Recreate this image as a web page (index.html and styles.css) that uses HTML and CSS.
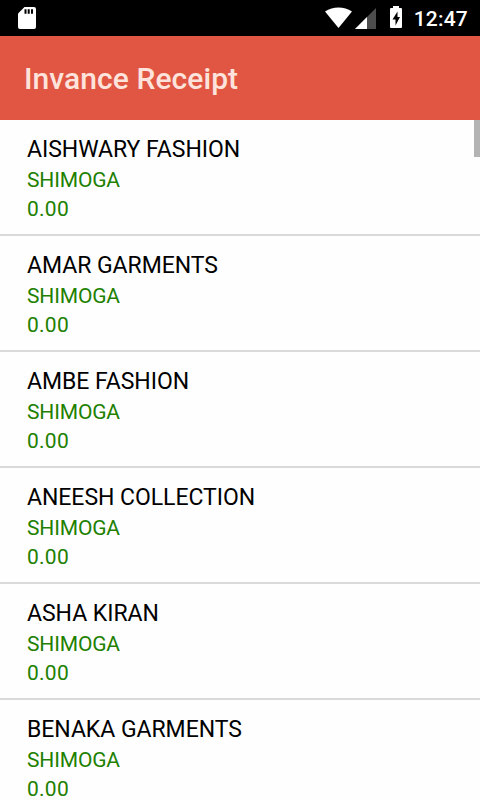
FILE: index.html
```html
<!DOCTYPE html>
<html lang="en">
<head>
    <meta charset="UTF-8">
    <meta name="viewport" content="width=device-width, initial-scale=1.0">
    <title>Invance Receipt</title>
    <link rel="stylesheet" href="styles.css">
</head>
<body>
    <div class="status-bar">
        <svg class="icon-sd" width="18" height="22" viewBox="0 0 18 22"><path d="M6.500 0H16a2 2 0 0 1 2 2v18a2 2 0 0 1-2 2H2a2 2 0 0 1-2-2V6.500z" fill="#fff"/><path d="M6.500 2.200h2v4.600h-2zM9.700 2.200h2v4.600h-2zM13 2.200h2v4.600h-2z" fill="#000"/></svg>
        <div class="status-right">
            <svg class="icon-wifi" width="28" height="22" viewBox="0 0 28 22"><path d="M13.500 21L0 4.500C8 -1 19 -1 27 4.500z" fill="#fff"/></svg>
            <svg class="icon-signal" width="22" height="22" viewBox="0 0 22 22"><path d="M0 22L21 1V22z" fill="#4d4d4d"/><path d="M0 22L12 10V22z" fill="#fff"/></svg>
            <svg class="icon-battery" width="12" height="22" viewBox="0 0 12 22"><path d="M3 0h6v2H11q1 0 1 1v18q0 1-1 1H1q-1 0-1-1V3q0-1 1-1h2z" fill="#fff"/><path d="M7.500 5.500L2.500 13.500H5.500v6l4.500-8.500H7.500z" fill="#000"/></svg>
            <span class="clock">12:47</span>
        </div>
    </div>
    <header>
        <h1>Invance Receipt</h1>
    </header>
    <main>
        <ul class="customer-list">
            <li><h2>AISHWARY FASHION</h2><p>SHIMOGA</p><p class="amount">0.00</p></li>
            <li><h2>AMAR GARMENTS</h2><p>SHIMOGA</p><p class="amount">0.00</p></li>
            <li><h2>AMBE FASHION</h2><p>SHIMOGA</p><p class="amount">0.00</p></li>
            <li><h2>ANEESH COLLECTION</h2><p>SHIMOGA</p><p class="amount">0.00</p></li>
            <li><h2>ASHA KIRAN</h2><p>SHIMOGA</p><p class="amount">0.00</p></li>
            <li><h2>BENAKA GARMENTS</h2><p>SHIMOGA</p><p class="amount">0.00</p></li>
        </ul>
        <div class="scroll-thumb"></div>
    </main>
</body>
</html>
```
FILE: styles.css
```css
* { margin: 0; padding: 0; box-sizing: border-box; }
body { height: 100vh; display: flex; flex-direction: column; overflow: hidden; font-family: Roboto, sans-serif; background: #fefefe; }
.status-bar { flex: none; height: 36px; padding: 0 12px 0 18px; display: flex; align-items: center; justify-content: space-between; background: #000; color: #fff; }
.status-right { height: 36px; display: flex; align-items: center; }
.icon-battery { margin: 0 0 2px 13px; }
.icon-signal { margin-left: 2px; }
.clock { margin-left: 12px; font-size: 21px; font-weight: 500; line-height: 36px; letter-spacing: 0.2px; padding-top: 1px; }
header { flex: none; height: 84px; padding: 0 24px; display: flex; align-items: center; background: #e15643; }
h1 { font-size: 30px; font-weight: 500; letter-spacing: 0.07px; color: #fde3dc; }
main { flex: 1; position: relative; overflow: hidden; }
.customer-list { list-style: none; }
.customer-list li { height: 116px; padding: 14px 27px 0; border-bottom: 2px solid #dadada; }
.customer-list h2 { font-size: 23px; font-weight: 400; line-height: 32px; letter-spacing: -0.04px; color: #000; }
.customer-list p { font-size: 21px; line-height: 29px; letter-spacing: -0.15px; color: #218000; }
.customer-list .amount { letter-spacing: 0.25px; }
.scroll-thumb { position: absolute; top: 0; right: 0; width: 6px; height: 37px; background: #b3b3b3; }
```
